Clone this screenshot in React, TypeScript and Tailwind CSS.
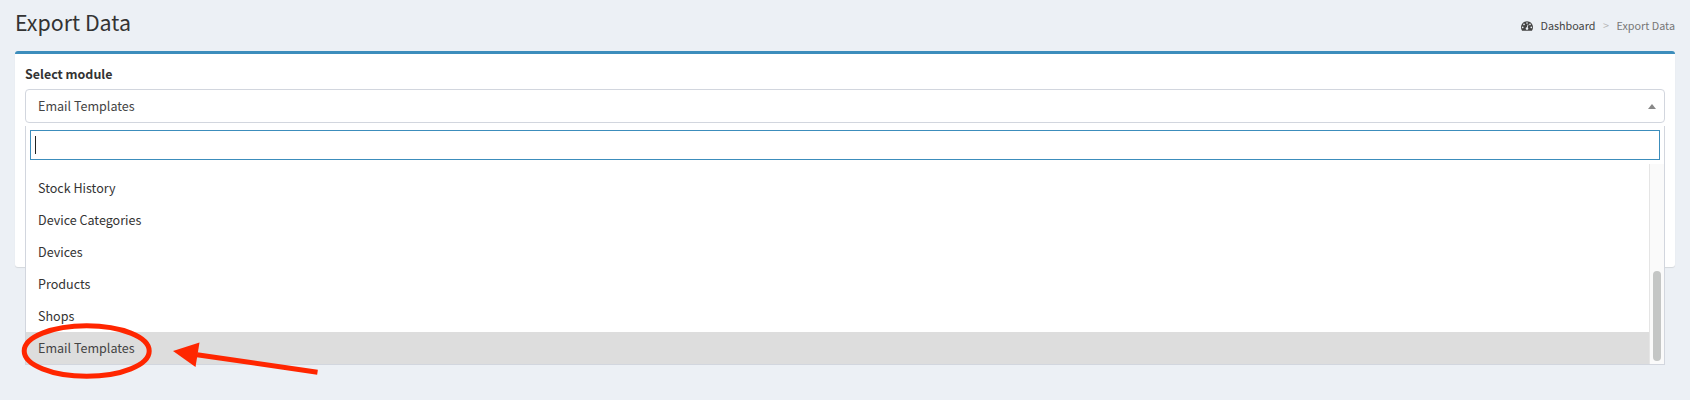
const modules = [
  "Stock History",
  "Device Categories",
  "Devices",
  "Products",
  "Shops",
  "Email Templates",
];

function DashboardIcon() {
  return (
    <svg className="mt-[2px] mr-[7px] h-[10px] w-[12px]" viewBox="0 256 1792 1408" fill="#444">
      <path d="M384 1152q0-53-37.5-90.5t-90.5-37.5-90.5 37.5-37.5 90.5 37.5 90.5 90.5 37.5 90.5-37.5 37.5-90.5zm192-448q0-53-37.5-90.5t-90.5-37.5-90.5 37.5-37.5 90.5 37.5 90.5 90.5 37.5 90.5-37.5 37.5-90.5zm428 481l101-382q6-26-7.5-48.5t-38.5-29.5-48 6.5-30 39.5l-101 382q-60 5-107 43.5t-63 98.5q-20 77 20 146t117 89 146-20 89-117q16-60-6-117t-72-91zm660-33q0-53-37.5-90.5t-90.5-37.5-90.5 37.5-37.5 90.5 37.5 90.5 90.5 37.5 90.5-37.5 37.5-90.5zm-640-640q0-53-37.5-90.5t-90.5-37.5-90.5 37.5-37.5 90.5 37.5 90.5 90.5 37.5 90.5-37.5 37.5-90.5zm448 192q0-53-37.5-90.5t-90.5-37.5-90.5 37.5-37.5 90.5 37.5 90.5 90.5 37.5 90.5-37.5 37.5-90.5zm320 448q0 261-141 483-19 29-54 29h-1402q-35 0-54-29-141-221-141-483 0-182 71-348t191-286 286-191 348-71 348 71 286 191 191 286 71 348z" />
    </svg>
  );
}

function Header() {
  return (
    <header className="flex h-[51px] justify-between px-[15px]">
      <h1 className="mt-[7px] h-[30px] text-[21.4px] leading-[30px]">Export Data</h1>
      <nav className="mt-[15px] flex h-[20px] items-center text-[10.8px] leading-[20px]">
        <DashboardIcon />
        <span className="text-[#444]">Dashboard</span>
        <span className="w-[21px] text-center text-[#b5b5b5]">&gt;</span>
        <span className="text-[#777]">Export Data</span>
      </nav>
    </header>
  );
}

function Dropdown() {
  return (
    <div className="absolute top-[37px] left-0 flex h-[239px] w-full flex-col border border-t-0 border-[#d2d6de] bg-white">
      <div className="px-[4px] pt-[4px]">
        <div className="flex h-[30px] items-center border border-[#3c8dbc] pl-[4px]">
          <span className="h-[18px] w-px bg-[#222]" />
        </div>
      </div>
      <div className="mt-[4px] flex h-[200px]">
        <ul className="flex-1 pt-[8px]">
          {modules.map((name) => (
            <li
              key={name}
              className={
                name === "Email Templates"
                  ? "h-[32px] bg-[#ddd] pl-[12px] leading-[32px] text-[#444]"
                  : "h-[32px] pl-[12px] leading-[32px]"
              }
            >
              {name}
            </li>
          ))}
        </ul>
        <div className="flex w-[15px] flex-col justify-end border-l border-[#e5e5e5] bg-[#fafafa] pb-[3px] pl-[3px]">
          <span className="h-[90px] w-[8px] rounded-full bg-[#c4c6c5]" />
        </div>
      </div>
    </div>
  );
}

function Annotation() {
  return (
    <svg className="pointer-events-none absolute top-[315px] left-0" width="330" height="75" viewBox="0 315 330 75">
      <ellipse cx="86.7" cy="351" rx="62.5" ry="25.2" fill="none" stroke="#ff2600" strokeWidth="5" />
      <path d="M197 354.7 317.5 372.2" stroke="#ff2600" strokeWidth="5" />
      <path d="M173 351 199.5 342.5 195.5 367Z" fill="#ff2600" />
    </svg>
  );
}

export default function App() {
  return (
    <div className="relative h-[400px] overflow-hidden bg-[#ecf0f5] font-['Noto_Sans_CJK_SC',sans-serif] text-[12.55px] text-[#333]">
      <Header />
      <main className="mx-[15px] h-[216px] rounded-[3px] border-t-[3px] border-[#3c8dbc] bg-white px-[10px] pt-[10px] shadow-[0_1px_1px_rgba(0,0,0,0.1)]">
        <label className="block h-[25px] text-[12.45px] leading-[20px] font-bold">Select module</label>
        <div className="relative">
          <div className="flex h-[34px] items-center justify-between rounded-[4px] border border-[#d2d6de] pr-[8px] pl-[12px] text-[#444]">
            <span>Email Templates</span>
            <svg className="mt-px" width="8" height="5" viewBox="0 0 8 5">
              <path d="M4 0 8 5H0Z" fill="#888" />
            </svg>
          </div>
          <Dropdown />
        </div>
      </main>
      <Annotation />
    </div>
  );
}
